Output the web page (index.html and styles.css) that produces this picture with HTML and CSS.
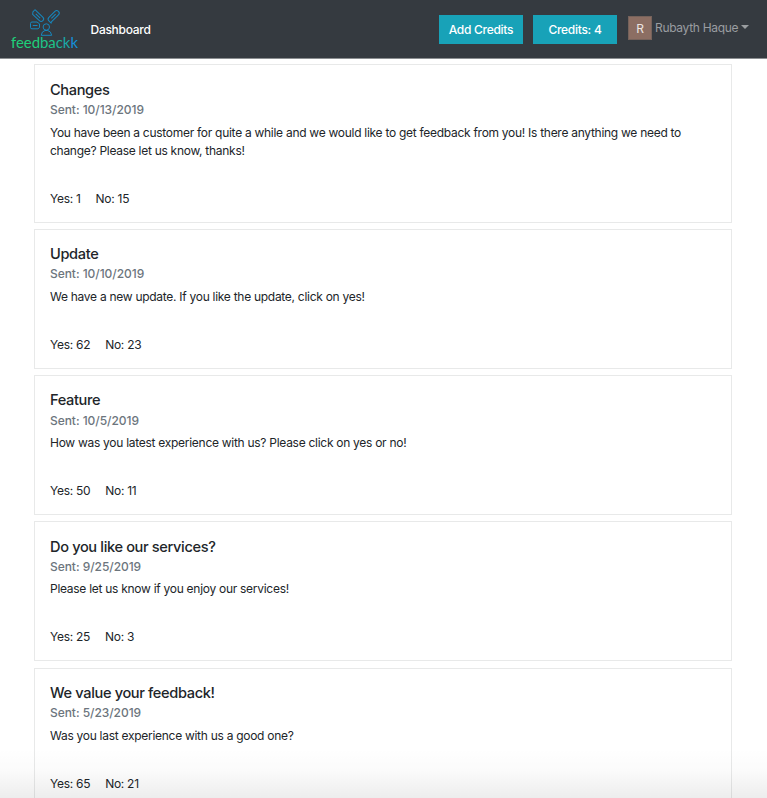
FILE: index.html
```html
<!DOCTYPE html>
<html lang="en">
<head>
<meta charset="utf-8">
<title>Feedbackk</title>
<link rel="stylesheet" href="styles.css">
</head>
<body>
<header class="navbar">
  <a class="brand">
    <svg class="logo" viewBox="0 0 72 45" width="72" height="45">
      <g fill="none" stroke="#1787bd" stroke-width="1" stroke-linejoin="round">
        <g transform="translate(0 .5) rotate(43 28 9.500)">
          <path d="M21.500 7H32.200A2.500 2.500 0 0 1 32.200 12H23L21.500 10Z"/>
          <path d="M25 9.500H31"/>
        </g>
        <g transform="translate(0 .5) rotate(-45 43.500 9.800)">
          <path d="M39.500 7.300H48A2.500 2.500 0 0 1 48 12.300H38L37 13V9.800A2.500 2.500 0 0 1 39.500 7.300Z"/>
          <path d="M40.500 9.800H46.500"/>
        </g>
        <path d="M22 16H27L29.500 17.800V21.500L28 22.800H22Q20.500 22.800 20.500 21.500V17.500Q20.500 16 22 16ZM22.800 19.500H27.500"/>
        <circle cx="36.300" cy="21" r="3.200"/>
        <path d="M31.200 29.300Q31.700 25.200 35 24.500H37.800Q41 25.200 41.700 29.300Z"/>
      </g>
      <text class="wordmark" x="1" y="42.300" textLength="67" lengthAdjust="spacingAndGlyphs"><tspan fill="#1fd07a">feed</tspan><tspan fill="#1ec489">ba</tspan><tspan fill="#1bb59a">c</tspan><tspan fill="#1aa9a8">k</tspan><tspan fill="#148fd8">k</tspan></text>
    </svg>
  </a>
  <a class="nav-link">Dashboard</a>
  <div class="actions">
    <button class="btn">Add Credits</button>
    <button class="btn">Credits: 4</button>
    <div class="user"><span class="avatar">R</span><span class="name">Rubayth Haque</span><span class="caret"></span></div>
  </div>
</header>
<main class="surveys">
  <article class="card"><h5>Changes</h5><h6>Sent: 10/13/2019</h6><p>You have been a customer for quite a while and we would like to get feedback from you! Is there anything we need to change? Please let us know, thanks!</p><div class="votes"><span>Yes: 1</span><span>No: 15</span></div></article>
  <article class="card"><h5>Update</h5><h6>Sent: 10/10/2019</h6><p>We have a new update. If you like the update, click on yes!</p><div class="votes"><span>Yes: 62</span><span>No: 23</span></div></article>
  <article class="card"><h5>Feature</h5><h6>Sent: 10/5/2019</h6><p>How was you latest experience with us? Please click on yes or no!</p><div class="votes"><span>Yes: 50</span><span>No: 11</span></div></article>
  <article class="card"><h5>Do you like our services?</h5><h6>Sent: 9/25/2019</h6><p>Please let us know if you enjoy our services!</p><div class="votes"><span>Yes: 25</span><span>No: 3</span></div></article>
  <article class="card"><h5>We value your feedback!</h5><h6>Sent: 5/23/2019</h6><p>Was you last experience with us a good one?</p><div class="votes"><span>Yes: 65</span><span>No: 21</span></div></article>
</main>
<div class="fade"></div>
</body>
</html>
```
FILE: styles.css
```css
* { box-sizing: border-box; }
html, body { height: 798px; overflow: hidden; }
body {
  margin: 0;
  background: #fff;
  color: #212529;
  font: 12px/18px Inter, "Liberation Sans", sans-serif;
  letter-spacing: -.28px;
}
.navbar {
  display: flex;
  align-items: center;
  height: 58.500px;
  padding-left: 10px;
  background: #353a40;
  border-bottom: 1px solid #8b8e91;
}
.brand { height: 45px; width: 80.500px; }
.logo { display: block; }
.wordmark { font: 400 14.500px Lato, sans-serif; letter-spacing: 0; }
.nav-link { margin-top: 2px; color: #fff; font-weight: 500; }
.actions { display: flex; align-items: center; margin-left: auto; padding-right: 18px; }
.btn {
  width: 84px;
  height: 29px;
  margin: 1px 10px 0 0;
  padding: 1px 0 0;
  border: 0;
  border-radius: 0;
  background: #18a2b8;
  color: #fff;
  font: inherit;
  font-weight: 500;
  letter-spacing: inherit;
}
.user { display: flex; align-items: center; color: #9a9da0; margin-left: 1px; }
.name { margin-top: -2px; letter-spacing: -.3px; }
.avatar {
  width: 24px;
  height: 24px;
  margin: -1px 3px 0 0;
  border: 1px solid #75625b;
  background: #8c6e63;
  color: #ece5e2;
  line-height: 23px;
  text-align: center;
}
.caret { margin: -3px 0 0 2.700px; border: 4px solid transparent; border-top-color: #9a9da0; border-bottom: 0; }
.surveys {
  display: flex;
  flex-direction: column;
  gap: 6.080px;
  width: 698px;
  margin: 5.950px 0 0 34px;
}
.card {
  flex: none;
  border: 1px solid #e8e9e9;
  padding: 15.300px 15px 14px;
}
h5, h6, p { margin: 0; }
h5 { font-size: 14.600px; line-height: 18.400px; font-weight: 500; letter-spacing: -.36px; }
h6 { margin-top: 3px; font-size: 12px; line-height: 15px; font-weight: 500; letter-spacing: -.05px; color: #6c757d; }
p { margin: 6.500px 0 30px; }
.votes { display: flex; gap: 15px; }
.fade {
  position: absolute;
  left: 0;
  right: 0;
  top: 748px;
  height: 50px;
  background: linear-gradient(rgba(0,0,0,0), rgba(0,0,0,.015) 45%, rgba(0,0,0,.07));
}
```
